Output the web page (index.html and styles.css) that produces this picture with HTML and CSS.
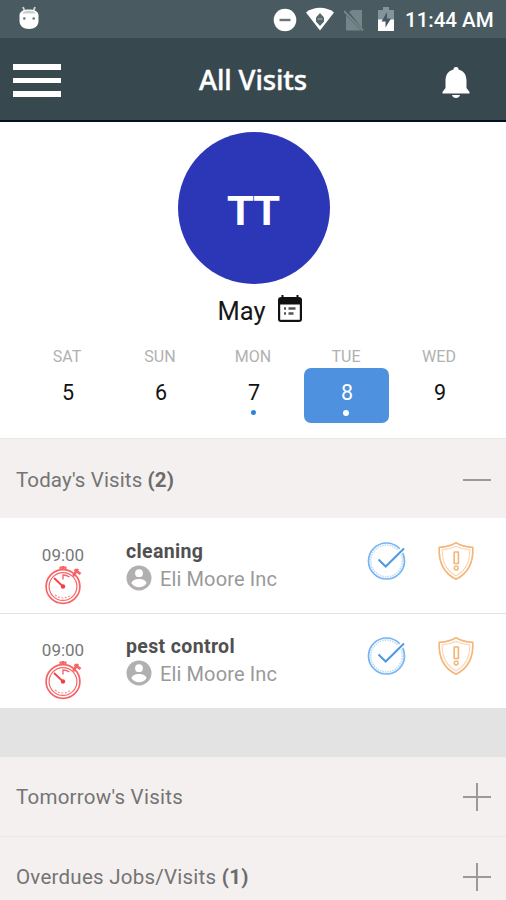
FILE: index.html
```html
<!DOCTYPE html>
<html lang="en">
<head>
<meta charset="utf-8">
<title>All Visits</title>
<link rel="stylesheet" href="styles.css">
</head>
<body>
<svg class="defs" width="0" height="0" aria-hidden="true">
  <symbol id="stopwatch" viewBox="0 0 38 40">
    <g fill="none" stroke="#f86466">
      <circle cx="18" cy="21.5" r="16.9" stroke-width="1.700"/>
      <circle cx="18" cy="21.5" r="13.9" stroke-width="1.200"/>
      <path d="M15.500 4.500v-2h5v2M18 1v3" stroke-width="2"/>
      <path d="M29.500 4.500l6 4.500M33 4l-4 5.500M30 9l-2 2" stroke-width="2.800"/>
      <path d="M18 14.500v-4.500c3 0 5 1 6.500 2" stroke-width="1.400"/>
      <path d="M18 21.500L9 13" stroke="#f04447" stroke-width="1.800"/>
      <path d="M10 30c5 4 11 4 16 0" stroke-width="1.100" stroke-dasharray="2 1.500" opacity=".7"/>
    </g>
    <circle cx="18" cy="21.500" r="2.200" fill="#f04043"/>
  </symbol>
  <symbol id="person" viewBox="0 0 26 26">
    <circle cx="13" cy="13" r="12.500" fill="#b1afb0"/>
    <circle cx="13" cy="8.200" r="3.900" fill="#fff"/>
    <path d="M5.500 18.300c0-3 4.500-4.400 7.500-4.400s7.500 1.400 7.500 4.400a9 9 0 0 1-15 0z" fill="#fff"/>
  </symbol>
  <symbol id="check" viewBox="0 0 40 40">
    <g fill="none" stroke="#76b4f2">
      <circle cx="19.500" cy="20" r="18" stroke-width="1.700"/>
      <circle cx="19.500" cy="20" r="15.900" stroke-width="1.800" stroke-dasharray="1.500 1" opacity=".45"/>
      <path d="M21 23.500L37 7" stroke="#fff" stroke-width="5"/>
      <path d="M11.500 18.500l7.200 7L37 7.500" stroke="#4f98e2" stroke-width="2"/>
    </g>
  </symbol>
  <symbol id="shield" viewBox="0 0 38 40">
    <g fill="none" stroke="#f4b67b" stroke-linejoin="round">
      <path d="M19 1.800C14 5 8 6 2.200 6.300 1.500 21 6 32 19 38.200 32 32 36.500 21 35.800 6.300 30 6 24 5 19 1.800z" stroke-width="1.700"/>
      <path d="M19 5.200C14.500 7.500 10 8.500 5.200 8.800 5 20.500 9 29.500 19 34.900 29 29.500 33 20.500 32.800 8.800 28 8.500 23.500 7.500 19 5.200z" stroke-width="1.200" opacity=".55"/>
      <path d="M17.200 11h4.200v11.500h-4.200z" stroke-width="1.700"/>
      <circle cx="19.200" cy="27" r="1.900" stroke-width="1.500"/>
    </g>
  </symbol>
</svg>

<div class="status">
  <svg class="droid" width="22" height="26" viewBox="0 0 22 26"><path d="M5 2l2 5M17 2l-2 5" stroke="#c9d0d2" stroke-width="2"/><path d="M1.500 10C2 6 6 4.500 11 4.500S20 6 20.500 10v6c0 5-4 8-9.500 8s-9.500-3-9.500-8z" fill="#fff"/><path d="M4 8.500C6 4.500 16 4.500 18 8.500z" fill="#c9d0d2"/><circle cx="6.300" cy="13.500" r="1.300" fill="#66777d"/><circle cx="15.700" cy="13.500" r="1.300" fill="#66777d"/></svg>
  <div class="status-right">
    <svg width="24" height="24" viewBox="0 0 24 24"><circle cx="12" cy="12" r="11.300" fill="#fff"/><path d="M6.500 12h11" stroke="#6a787d" stroke-width="2.400"/></svg>
    <svg class="wifi" width="28" height="24" viewBox="0 0 28 24"><path d="M0 5.500C8-.7 20-.7 28 5.500L14 23.500z" fill="#fff"/><path d="M14 6l4 4.500v4L14 19l-4-4.500v-4z" fill="#56666c"/><path d="M11.500 12h5" stroke="#aab3b6"/></svg>
    <svg class="sim" width="20" height="24" viewBox="0 0 20 24"><path d="M5 3l3-2h10v18zM2 6l15 15.500H2z" fill="#75858a"/><path d="M0 2l19 19.500" stroke="#75858a" stroke-width="2"/></svg>
    <svg class="battery" width="16" height="24" viewBox="0 0 16 24"><path d="M0 3h5V0h6v3h5v21H0z" fill="#84949a"/><path d="M0 12.500h16V24H0z" fill="#fff"/><path d="M9 5L3.500 14.500H7.500V20.500L13 11.500H9z" fill="#475960"/></svg>
    <span class="clock">11:44 AM</span>
  </div>
</div>

<header class="appbar">
  <div class="menu"><i></i><i></i><i></i></div>
  <h1>All Visits</h1>
  <svg class="bell" width="28" height="33" viewBox="0 0 28 33"><path d="M14 1c2 0 2.500 1.200 2.500 2.500C22 5 24.500 9 24.500 15v7l3 4v1.500H.5V26l3-4v-7c0-6 2.500-10 8-11.500C11.500 2.200 12 1 14 1z" fill="#fff"/><path d="M10 29h8c-.5 2-2 3-4 3s-3.500-1-4-3z" fill="#fff"/></svg>
</header>

<main>
  <section class="profile">
    <div class="avatar">TT</div>
    <div class="month"><span>May</span>
      <svg width="26" height="28" viewBox="0 0 26 28"><path d="M4.500 0h2v2h13V0h2v2c2.500 0 3.500 1 3.500 3v19c0 2-1 3-3 3H4c-2 0-3-1-3-3V5c0-2 1-3 3.500-3z" fill="#111"/><path d="M3.200 9.500h19.600v15.300H3.200z" fill="#fff"/><path d="M7 13.500h2M11.500 13.500h7M7 18.500h2M11.500 18.500h5" stroke="#555" stroke-width="2.500"/></svg>
    </div>
    <div class="week">
      <div class="day"><small>SAT</small><div class="date"><b>5</b></div></div>
      <div class="day"><small>SUN</small><div class="date"><b>6</b></div></div>
      <div class="day"><small>MON</small><div class="date marked"><b>7</b></div></div>
      <div class="day"><small>TUE</small><div class="date marked selected"><b>8</b></div></div>
      <div class="day"><small>WED</small><div class="date"><b>9</b></div></div>
    </div>
  </section>

  <div class="group first"><span>Today's Visits <b>(2)</b></span><i class="toggle minus"></i></div>
  <article class="visit">
    <div class="time"><span>09:00</span><svg width="38" height="40"><use href="#stopwatch"/></svg></div>
    <div class="info"><h2>cleaning</h2><p><svg width="26" height="26"><use href="#person"/></svg><span>Eli Moore Inc</span></p></div>
    <svg class="check" width="40" height="40"><use href="#check"/></svg>
    <svg class="shield" width="38" height="40"><use href="#shield"/></svg>
  </article>
  <article class="visit last">
    <div class="time"><span>09:00</span><svg width="38" height="40"><use href="#stopwatch"/></svg></div>
    <div class="info"><h2>pest control</h2><p><svg width="26" height="26"><use href="#person"/></svg><span>Eli Moore Inc</span></p></div>
    <svg class="check" width="40" height="40"><use href="#check"/></svg>
    <svg class="shield" width="38" height="40"><use href="#shield"/></svg>
  </article>
  <div class="gap"></div>
  <div class="group"><span>Tomorrow's Visits</span><i class="toggle plus"></i></div>
  <div class="group"><span>Overdues Jobs/Visits <b>(1)</b></span><i class="toggle plus"></i></div>
</main>
</body>
</html>
```
FILE: styles.css
```css
* { box-sizing: border-box; }
html, body { height: 900px; overflow: hidden; }
body { margin: 0; width: 506px; background: #fff; font-family: Roboto, "Liberation Sans", sans-serif; }
svg { display: block; flex: none; }
.defs { position: absolute; }
h1, h2, p { margin: 0; font-weight: 400; }

.status { height: 38px; background: #495b61; display: flex; justify-content: space-between; padding: 5px 13px 0 18px; }
.status-right { display: flex; align-items: flex-start; color: #fff; }
.status-right svg { margin-top: 3px; }
.status-right .wifi { margin: 2px 0 0 9px; }
.status-right .sim { margin: 4px 0 0 10px; }
.status-right .battery { margin: 2px 0 0 14px; }
.clock { width: 88px; margin-left: 11px; font-size: 20.5px; line-height: 30px; font-weight: 500; white-space: nowrap; }

.appbar { height: 84px; background: #38484f; border-bottom: 2px solid #04101f; display: grid; grid-template-columns: 100px 1fr 100px; }
.menu { padding: 26px 0 0 13px; display: flex; flex-direction: column; gap: 8px; }
.menu i { width: 48px; height: 5.5px; background: #fff; }
.appbar h1 { color: #fff; font: 500 27.5px/40px "Noto Sans", sans-serif; text-align: center; padding-top: 22px; letter-spacing: -.1px; white-space: nowrap; -webkit-text-stroke: .4px #fff; }
.bell { margin: 28px 0 0 36px; }

.profile { height: 316px; display: flex; flex-direction: column; align-items: center; padding-top: 10px; }
.avatar { width: 152px; height: 152px; flex: none; border-radius: 50%; background: #2b37b7; color: #fff; font: bold 43px/157px "Liberation Sans", sans-serif; text-align: center; margin-left: 1px; }
.month { height: 36px; margin-top: 8px; margin-left: 14px; display: flex; gap: 11px; font-size: 25.5px; line-height: 38px; color: #171717; }
.month svg { margin-top: 3px; }
.week { display: grid; grid-template-columns: repeat(5, 93px); margin-top: 17px; }
.day { display: flex; flex-direction: column; align-items: center; }
.day small { font-size: 16px; line-height: 24px; height: 22px; color: #b1b1b1; }
.date { width: 85px; height: 55px; border-radius: 7px; margin-top: 1px; padding: 10px 0 0 2px; display: flex; flex-direction: column; align-items: center; color: #111; }
.date b { font-weight: 400; font-size: 21.5px; line-height: 30px; }
.marked::after { content: ""; width: 5px; height: 5px; border-radius: 50%; background: #2d83d8; margin: 2px 2px 0 0; flex: none; }
.selected { background: #4e91df; color: #fff; }
.selected::after { background: #fff; width: 6px; height: 6px; }

.group { height: 80px; background: #f3f0ef; border-top: 1px solid #e8e6e5; display: flex; align-items: center; justify-content: space-between; padding: 0 15px 0 16px; font-size: 20.5px; letter-spacing: .25px; color: #747474; }
.gap + .group { height: 79px; border-top: 0; }
.group.first { padding-top: 2px; letter-spacing: .12px; }
.group b { font-weight: 700; color: #6b6b6b; }
.toggle { width: 28px; height: 28px; background: linear-gradient(#9b9999, #9b9999) center / 28px 2px no-repeat; }
.plus { background: linear-gradient(#9b9999, #9b9999) center / 28px 2px no-repeat, linear-gradient(#9b9999, #9b9999) center / 2px 28px no-repeat; }

.visit { height: 95px; box-shadow: inset 0 1px #fff; display: grid; grid-template-columns: 126px 241px 71px 68px; }
.visit.last { box-shadow: inset 0 1px #e3e3e3; }
.time { padding-top: 26px; text-align: center; font-size: 17px; line-height: 22px; color: #777; }
.time svg { margin-left: 45px; margin-top: -1px; }
.info { padding-top: 20px; }
.info h2 { font-size: 19.5px; line-height: 28px; height: 26px; font-weight: 700; color: #505050; letter-spacing: .36px; }
.info p { display: flex; gap: 8px; font-size: 20px; line-height: 31px; color: #999; letter-spacing: .12px; }
.info p svg { margin-top: 1px; }
.check { margin-top: 23px; }
.shield { margin-top: 23px; margin-left: -1px; }
.gap { height: 49px; background: #e3e3e3; }
```
